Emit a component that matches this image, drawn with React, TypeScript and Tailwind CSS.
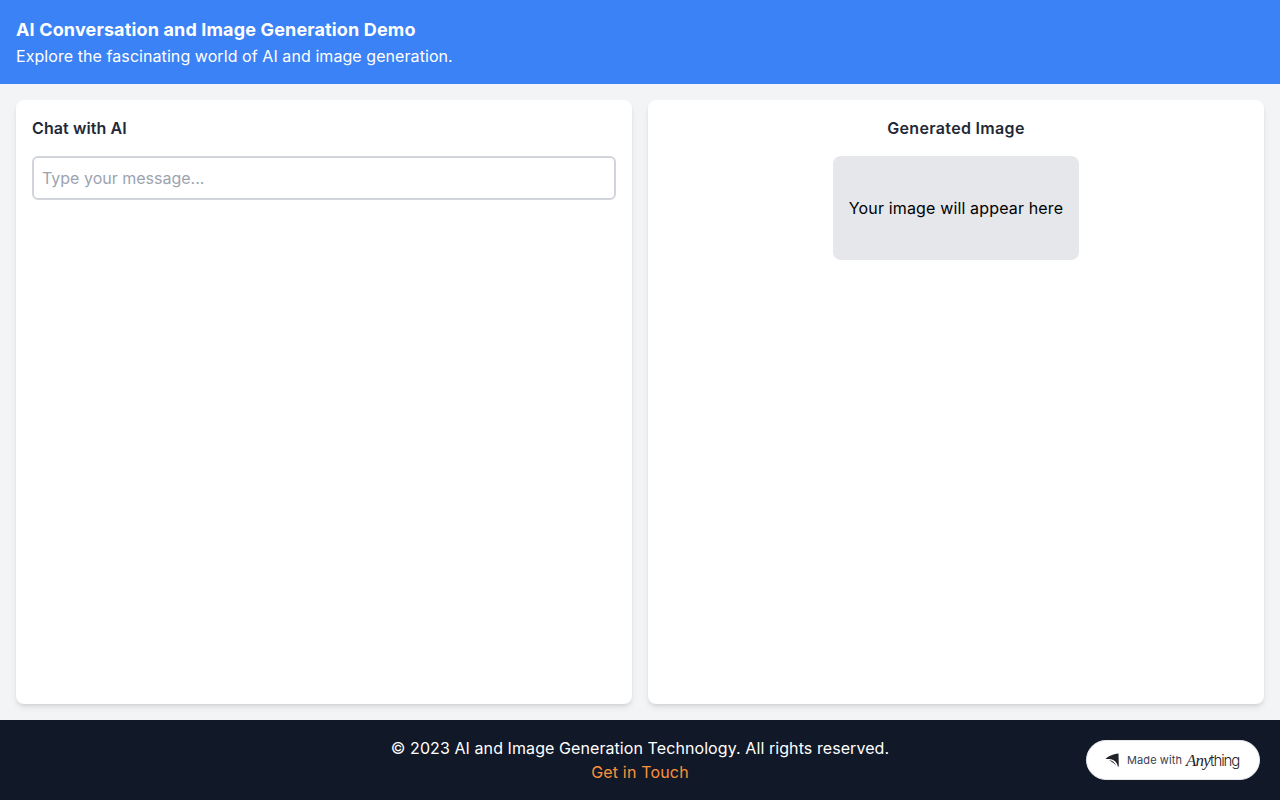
export default function App() {
  return (
    <div className="relative flex h-screen flex-col bg-[#f3f4f6] font-['Inter',sans-serif] text-base">
      {/* header */}
      <header className="bg-[#3b82f6] p-4 text-white">
        <h1 className="text-lg font-bold tracking-[0.15px]">AI Conversation and Image Generation Demo</h1>
        <p className="tracking-[0.07px]">Explore the fascinating world of AI and image generation.</p>
      </header>

      {/* panels */}
      <main className="flex flex-1 gap-4 p-4">
        <section className="flex-1 rounded-lg bg-white p-4 shadow-md">
          <h2 className="mb-4 font-semibold tracking-[0.09px] text-[#1f2937]">Chat with AI</h2>
          <input
            type="text"
            placeholder="Type your message..."
            className="w-full rounded-md border-2 border-[#d1d5db] p-2 outline-none placeholder:text-[#9ca3af]"
          />
        </section>
        <section className="flex flex-1 flex-col items-center rounded-lg bg-white p-4 shadow-md">
          <h2 className="mb-4 font-semibold tracking-[0.33px] text-[#1f2937]">Generated Image</h2>
          <div className="flex h-[104px] items-center justify-center rounded-lg bg-[#e5e7eb] p-4 tracking-[0.15px] text-black">
            Your image will appear here
          </div>
        </section>
      </main>

      {/* footer */}
      <footer className="bg-[#111827] p-4 text-center text-white">
        <p className="tracking-[0.08px]">© 2023 AI and Image Generation Technology. All rights reserved.</p>
        <a href="#" className="tracking-[0.17px] text-[#fb923c]">Get in Touch</a>
      </footer>

      {/* made with badge */}
      <div className="absolute right-5 bottom-5 flex h-10 w-[174px] items-center gap-2 rounded-full border border-gray-200 bg-white pl-[18px]">
        <svg width="14" height="14" viewBox="0 0 14 14" fill="#1f2328">
          <path d="M0.5 6 C3 3.2 8 1 13.5 0.5 L13.8 13.5 L12.8 13.5 C12.2 9.5 9 6.6 4.5 6.1 C3 5.9 1.5 5.9 0.5 6 Z" />
          <path d="M4 7.2 C7 7.4 9.8 9.4 11 12.5 C9 10 6.5 8.5 4 7.2 Z" />
        </svg>
        <span className="text-[11px] tracking-[0.1px] text-[#374151]">Made with</span>
        <span className="-ml-[4px] flex items-baseline text-[15px] leading-none text-[#1f2328]">
          <span className="font-['Liberation_Serif',serif] text-[17px] tracking-[-0.8px] italic">Any</span>
          <span className="font-light tracking-[-1.1px]">thing</span>
        </span>
      </div>
    </div>
  );
}
